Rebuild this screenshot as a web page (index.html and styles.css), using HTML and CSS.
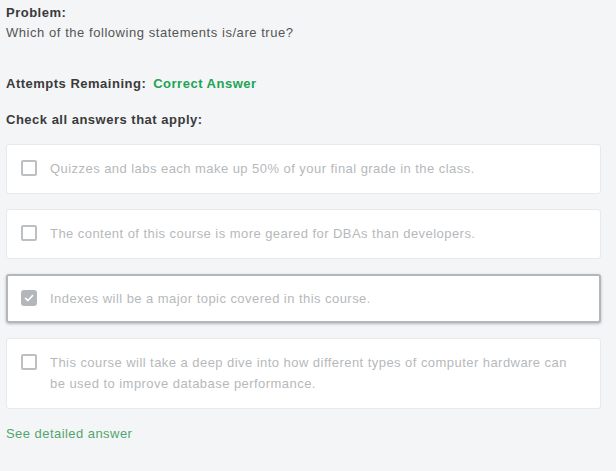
FILE: index.html
```html
<!DOCTYPE html>
<html>
<head>
<meta charset="utf-8">
<link rel="stylesheet" href="styles.css">
</head>
<body>
<div class="page">
  <div class="problem">
    <div class="label">Problem:</div>
    <div class="question">Which of the following statements is/are true?</div>
  </div>
  <div class="attempts"><span class="label">Attempts Remaining:</span><span class="correct">Correct Answer</span></div>
  <div class="instr label">Check all answers that apply:</div>
  <div class="options">
    <div class="option">
      <span class="box"></span>
      <span class="text">Quizzes and labs each make up 50% of your final grade in the class.</span>
    </div>
    <div class="option">
      <span class="box"></span>
      <span class="text">The content of this course is more geared for DBAs than developers.</span>
    </div>
    <div class="option selected">
      <span class="box checked"><svg viewBox="0 0 16 16" width="16" height="16"><path d="M3.4 8.4 L6.7 11.4 L12.7 4.9" fill="none" stroke="#fff" stroke-width="2.2" stroke-linecap="round" stroke-linejoin="round"/></svg></span>
      <span class="text">Indexes will be a major topic covered in this course.</span>
    </div>
    <div class="option">
      <span class="box"></span>
      <span class="text">This course will take a deep dive into how different types of computer hardware can be used to improve database performance.</span>
    </div>
  </div>
  <a class="detail">See detailed answer</a>
</div>
</body>
</html>
```

FILE: styles.css
```css
html, body {
  margin: 0;
  padding: 0;
  background: #f4f5f7;
}
.page {
  font-family: "Liberation Sans", Arial, sans-serif;
  font-size: 13px;
  color: #333;
  letter-spacing: 0.5px;
  padding: 3px 15px 0 6px;
}
.label {
  font-weight: bold;
  color: #3a3a3a;
}
.problem {
  line-height: 20px;
}
.question {
  color: #555;
  letter-spacing: 0.55px;
}
.attempts {
  margin-top: 31px;
  line-height: 20px;
}
.correct {
  margin-left: 7px;
  color: #21a353;
  font-weight: bold;
}
.instr {
  margin-top: 16px;
  line-height: 20px;
}
.options {
  margin-top: 14px;
  display: flex;
  flex-direction: column;
  gap: 15px;
}
.option {
  background: #fff;
  border: 1px solid #e8e9eb;
  border-radius: 3px;
  display: flex;
  align-items: flex-start;
  padding: 13px 20px 14px 14px;
  min-height: 20px;
  letter-spacing: 0.45px;
}
.option .text {
  color: #b6b9bc;
  line-height: 21px;
}
.box {
  flex: none;
  width: 12px;
  height: 12px;
  border: 2px solid #bdc0c3;
  border-radius: 2px;
  margin: 2px 13px 0 0;
  display: flex;
  align-items: center;
  justify-content: center;
}
.box.checked {
  background: #b3b7bb;
  border-color: #b3b7bb;
  border-radius: 3px;
}
.box svg {
  display: block;
}
.option.selected {
  border: 2px solid #b3b7bb;
  padding: 12px 19px 12px 13px;
  box-shadow: 0 1px 3px rgba(0,0,0,0.25);
}
.detail {
  display: block;
  margin-top: 17px;
  color: #52a56e;
  letter-spacing: 0.45px;
}
```
